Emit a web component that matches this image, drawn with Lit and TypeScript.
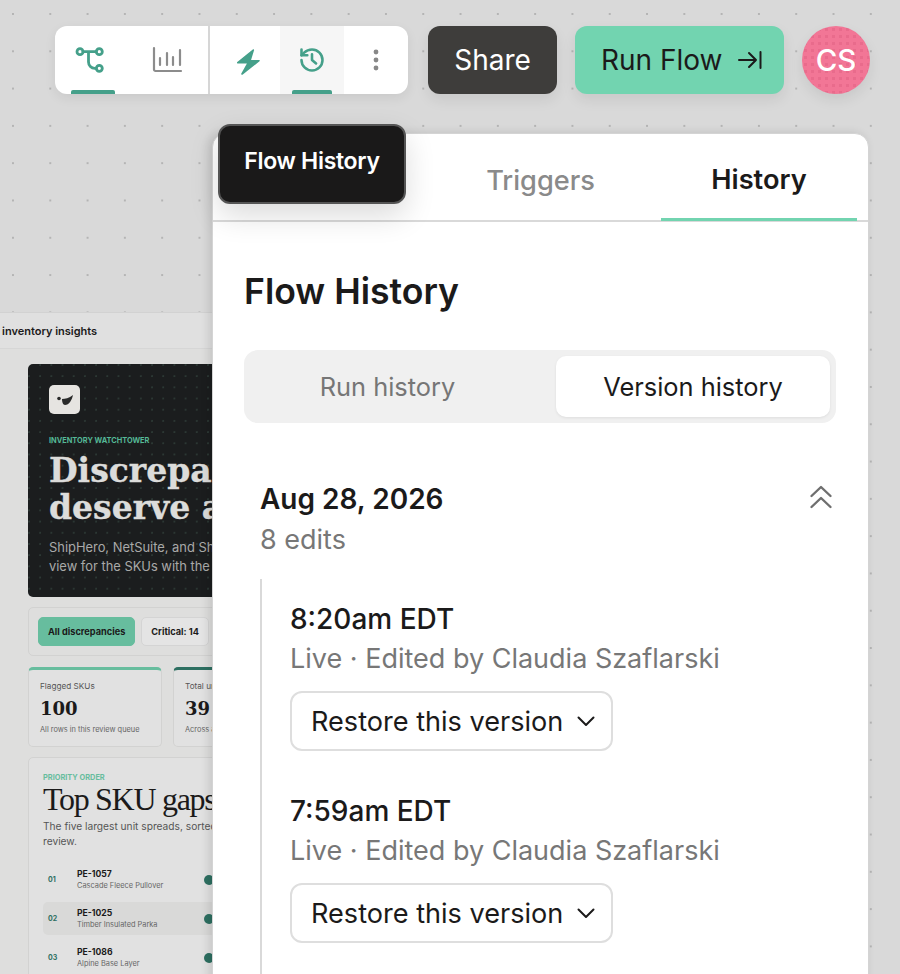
import { LitElement, html, css } from "lit";
import { customElement } from "lit/decorators.js";

@customElement("app-root")
export class AppRoot extends LitElement {
  static styles = css`
    :host {
      display: block;
      position: relative;
      width: 900px;
      height: 974px;
      overflow: hidden;
      font-family: Inter, "Liberation Sans", sans-serif;
      color: #1b1a1a;
      background-color: #d9d9d9;
      background-image: radial-gradient(circle at 1px 1px, #b4b4b4 1px, transparent 1.3px);
      background-size: 37.3px 37.3px;
      background-position: 12px 13px;
    }
    svg { display: block; }
    .topbar {
      display: flex;
      justify-content: flex-end;
      align-items: stretch;
      gap: 18px;
      padding: 26px 30px 0 0;
      height: 68px;
    }
    .tools {
      display: flex;
      margin-right: 2px;
      background: #fff;
      border-radius: 12px;
      overflow: hidden;
      box-shadow: 0 4px 12px rgba(0,0,0,.07);
    }
    .group { display: flex; }
    .g1 { gap: 11px; padding: 0 8px 0 6px; border-right: 2px solid #d6d6d6; }
    .g2 { padding-left: 6px; }
    .tool {
      position: relative;
      width: 64px;
      display: flex;
      align-items: center;
      justify-content: center;
    }
    .tool.hover { background: #f6f6f6; }
    .tool.on::after {
      content: "";
      position: absolute;
      bottom: 0;
      left: 10px;
      right: 10px;
      height: 4px;
      background: #45a08a;
      border-radius: 2px 2px 0 0;
    }
    .tool.hover.on::after { left: 12px; right: 12px; }
    .btn {
      display: flex;
      align-items: center;
      border-radius: 12px;
      font-size: 28px;
      font-weight: 400;
      box-shadow: 0 6px 14px rgba(0,0,0,.08);
    }
    .share { width: 129px; justify-content: center; background: #3e3d3b; color: #fff; }
    .run { width: 209px; padding-left: 26px; gap: 15px; box-sizing: border-box; background: #72d4b0; }
    .avatar {
      width: 68px;
      height: 68px;
      border-radius: 50%;
      display: flex;
      align-items: center;
      justify-content: center;
      color: #fff;
      font-size: 29.5px;
      font-weight: 500;
      background-color: #f27696;
      background-image: radial-gradient(circle, #e96b8c 1.6px, transparent 2px);
      background-size: 7px 7px;
      box-shadow: 0 6px 14px rgba(0,0,0,.08);
    }

    /* preview artboard on the canvas */
    .preview {
      position: absolute;
      left: 0;
      top: 312px;
      width: 212px;
      bottom: 0;
      overflow: hidden;
      background: #dededd;
    }
    .pv-head {
      height: 35px;
      display: flex;
      align-items: center;
      padding-left: 2px;
      background: #e0e0e0;
      border-top: 1px solid #d2d2d2;
      border-bottom: 1px solid #d6d6d6;
      font-size: 11px;
      font-weight: 600;
      white-space: nowrap;
    }
    .pv-body {
      width: 600px;
      padding: 15px 0 0 28px;
      display: flex;
      flex-direction: column;
      gap: 10px;
    }
    .hero {
      height: 233px;
      box-sizing: border-box;
      padding: 21px 0 0 21px;
      border-radius: 5px;
      background-color: #1b1d1e;
      background-image: radial-gradient(circle at 1px 1px, #2c3834 0.7px, transparent 1px);
      background-size: 11.2px 11.2px;
      color: #dcdcda;
    }
    .logo {
      width: 31px;
      height: 29px;
      border-radius: 5px;
      background: #e6e4e1;
      display: flex;
      align-items: center;
      justify-content: center;
    }
    .eyebrow {
      margin-top: 22px;
      font-size: 7.4px;
      font-weight: 700;
      color: #55b997;
      line-height: 10px;
      text-transform: uppercase;
    }
    .hero h1 {
      margin: 6px 0 0;
      font-family: "DejaVu Serif", serif;
      font-size: 33px;
      font-weight: 700;
      line-height: 37px;
      -webkit-text-stroke: 0.4px #dcdcda;
      white-space: nowrap;
    }
    .hero p {
      margin: 12px 0 0;
      font-size: 12.9px;
      line-height: 19px;
      color: #a9a9a8;
      white-space: nowrap;
    }
    .filters {
      height: 49px;
      box-sizing: border-box;
      border: 1px solid #d2d2d1;
      border-radius: 5px;
      display: flex;
      align-items: center;
      gap: 6px;
      padding-left: 9px;
      font-size: 9.2px;
      font-weight: 700;
    }
    .chip {
      height: 29px;
      display: flex;
      align-items: center;
      box-sizing: border-box;
      padding: 0 9px;
      border-radius: 5px;
      border: 1px solid #d4d4d4;
      background: #e4e4e4;
    }
    .chip.on { background: #67bd9e; border-color: #67bd9e; }
    .stats { display: flex; gap: 11px; margin-top: 1px; }
    .stat {
      width: 134px;
      height: 80px;
      box-sizing: border-box;
      padding: 11px 0 0 11px;
      border: 1px solid #d2d2d1;
      border-top: 3px solid #67bd9e;
      border-radius: 5px;
      background: #e1e1e1;
      white-space: nowrap;
    }
    .stat.dark { border-top-color: #2d6f61; }
    .stat .k { font-size: 8.2px; line-height: 11px; color: #555; }
    .stat .v {
      font-family: "DejaVu Serif", serif;
      font-weight: 700;
      font-size: 18px;
      line-height: 22px;
      margin-top: 6px;
    }
    .stat .s { font-size: 7.4px; line-height: 10px; color: #666; margin-top: 5px; }
    .prio {
      border: 1px solid #d2d2d1;
      border-radius: 5px;
      background: #e1e1e1;
      padding: 14px 0 0 14px;
      white-space: nowrap;
    }
    .prio .eb { font-size: 7.4px; font-weight: 700; line-height: 11px; color: #67bd9e; }
    .prio h2 {
      margin: 0;
      font-family: "Liberation Serif", serif;
      font-weight: 400;
      font-size: 32px;
      line-height: 32px;
      letter-spacing: -1.3px;
    }
    .prio p { margin: 4px 0 0; font-size: 10.2px; line-height: 15px; color: #555; }
    .rows { margin-top: 14px; }
    .row {
      display: flex;
      align-items: center;
      height: 33px;
      margin-bottom: 6px;
      border-radius: 5px;
    }
    .row.alt { background: #d9d9d8; }
    .row .n { width: 34px; padding-left: 5px; box-sizing: border-box; font-size: 7px; font-weight: 700; color: #2d6f61; }
    .row .name { width: 127px; }
    .row .a { font-size: 8.6px; font-weight: 700; line-height: 12px; }
    .row .b { font-size: 7.4px; line-height: 11px; color: #666; }
    .row .dot { width: 10px; height: 10px; border-radius: 50%; background: #2d6f61; }

    /* floating panel */
    .panel {
      position: absolute;
      left: 212px;
      top: 133px;
      width: 657px;
      height: 900px;
      box-sizing: border-box;
      background: #fff;
      border: 1px solid #d4d4d4;
      border-radius: 14px 14px 0 0;
      box-shadow: -3px 0 10px rgba(0,0,0,.12);
    }
    .tabs {
      display: flex;
      height: 86px;
      padding-right: 11px;
      border-bottom: 2px solid #d9d9d9;
      font-size: 27.2px;
    }
    .tab {
      display: flex;
      align-items: center;
      justify-content: center;
      color: #8a8a8a;
      font-weight: 500;
      padding-top: 7px;
      box-sizing: border-box;
    }
    .tab.t1 { width: 207px; }
    .tab.t2 { width: 241px; }
    .tab.t3 {
      width: 196px;
      color: #1b1a1a;
      font-weight: 600;
      border-bottom: 3px solid #72d4b0;
      margin-bottom: -1px;
    }
    .content { padding: 0 32px 0 31px; }
    .content h2 {
      margin: 48px 0 0;
      font-size: 35.6px;
      line-height: 44px;
      font-weight: 600;
    }
    .seg {
      margin-top: 36px;
      height: 73px;
      box-sizing: border-box;
      padding: 6px;
      border-radius: 14px;
      background: #f0f0f0;
      display: grid;
      grid-template-columns: 1fr 274px;
      font-size: 25.4px;
    }
    .seg div { display: flex; align-items: center; justify-content: center; color: #767676; }
    .seg .first { padding-right: 31px; }
    .seg .sel {
      color: #1b1a1a;
      background: #fff;
      border-radius: 10px;
      box-shadow: 0 1px 3px rgba(0,0,0,.08);
    }
    .day {
      margin-top: 57px;
      padding-left: 16px;
      display: flex;
      justify-content: space-between;
      align-items: flex-start;
    }
    .day .date { font-size: 28px; font-weight: 600; line-height: 38px; }
    .day .cnt { font-size: 27px; line-height: 44px; color: #777; }
    .day svg { margin: 4px 3px 0 0; }
    .timeline {
      margin: 17px 0 0 16px;
      padding: 20px 0 60px 28px;
      border-left: 2px solid #d9d9d9;
      display: flex;
      flex-direction: column;
      gap: 40px;
    }
    .t { font-size: 28px; line-height: 40px; font-weight: 500; }
    .m { font-size: 27px; line-height: 40px; color: #777; white-space: nowrap; }
    .restore {
      margin-top: 12px;
      width: 323px;
      height: 60px;
      box-sizing: border-box;
      padding-left: 19px;
      gap: 12px;
      display: flex;
      align-items: center;
      border: 2px solid #dedede;
      border-radius: 12px;
      font-size: 27.1px;
      white-space: nowrap;
    }
    .tip {
      position: absolute;
      left: 218px;
      top: 124px;
      width: 188px;
      height: 80px;
      box-sizing: border-box;
      display: flex;
      align-items: center;
      justify-content: center;
      padding-bottom: 7px;
      border: 2px solid #555;
      border-radius: 12px;
      background: #1a1919;
      color: #fff;
      font-size: 23px;
      font-weight: 600;
      letter-spacing: -0.3px;
      box-shadow: 0 12px 30px rgba(0,0,0,.14);
    }
  `;

  private entry(time: string) {
    return html`<div>
      <div class="t">${time}</div>
      <div class="m">Live · Edited by Claudia Szaflarski</div>
      <div class="restore">
        Restore this version
        <svg width="22" height="22" viewBox="0 0 22 22" fill="none" stroke="#1b1a1a" stroke-width="2" stroke-linecap="round" stroke-linejoin="round"><path d="M3.5 7.5 11 15l7.5-7.5"/></svg>
      </div>
    </div>`;
  }

  private row(n: string, a: string, b: string, alt = false) {
    return html`<div class="row ${alt ? "alt" : ""}">
      <div class="n">${n}</div>
      <div class="name"><div class="a">${a}</div><div class="b">${b}</div></div>
      <div class="dot"></div>
    </div>`;
  }

  render() {
    return html`
      <div class="topbar">
        <div class="tools">
          <div class="group g1">
            <div class="tool on">
              <svg width="40" height="40" viewBox="0 0 40 40" fill="none" stroke="#45a08a" stroke-width="2.8" stroke-linecap="round"><circle cx="7" cy="11.7" r="3"/><circle cx="26.3" cy="11.7" r="3"/><circle cx="26.3" cy="28.3" r="3"/><path d="M10 11.7h13.3M15.5 11.7V22a6.3 6.3 0 0 0 6.3 6.3h1.500"/></svg>
            </div>
            <div class="tool">
              <svg width="40" height="40" viewBox="0 0 40 40" fill="none" stroke="#8c8c8c" stroke-width="2.2" stroke-linecap="round"><path d="M6 8v21.5A1.5 1.5 0 0 0 7.500 31H33M12 25v-7M19 25V13M25 25v-8M32 25V10"/></svg>
            </div>
          </div>
          <div class="group g2">
            <div class="tool">
              <svg width="40" height="40" viewBox="0 0 40 40" fill="#45a08a" stroke="#45a08a" stroke-width="1.6" stroke-linejoin="round"><path d="M25.300 10 9.800 22.700h10.500L14 34l17-13.300h-9z"/></svg>
            </div>
            <div class="tool hover on">
              <svg width="28" height="28" viewBox="0 0 24 24" fill="none" stroke="#45a08a" stroke-width="2.200" stroke-linecap="round" stroke-linejoin="round"><path d="M3 12a9 9 0 1 0 9-9 9.750 9.750 0 0 0-6.740 2.740L3 8"/><path d="M3 3v5h5"/><path d="M12 7v5l3.500 3"/></svg>
            </div>
            <div class="tool">
              <svg width="10" height="28" viewBox="0 0 10 28" fill="#888"><circle cx="5" cy="6" r="2.400"/><circle cx="5" cy="14" r="2.400"/><circle cx="5" cy="22" r="2.400"/></svg>
            </div>
          </div>
        </div>
        <div class="btn share">Share</div>
        <div class="btn run">
          Run Flow
          <svg width="26" height="22" viewBox="0 0 26 22" fill="none" stroke="#1b1a1a" stroke-width="2" stroke-linecap="round" stroke-linejoin="round"><path d="M1 11h17M11 4l7 7-7 7M22.500 3v16"/></svg>
        </div>
        <div class="avatar">CS</div>
      </div>

      <div class="preview">
        <div class="pv-head">inventory insights</div>
        <div class="pv-body">
          <div class="hero">
            <div class="logo">
              <svg width="18" height="12" viewBox="0 0 18 12" fill="#2a2a2a"><path d="M6 5c3 0 7-1 11-4-1 5-4 10-8 10C7 11 6 8 6 5z"/><circle cx="3" cy="4.500" r="1.800"/></svg>
            </div>
            <div class="eyebrow">Inventory Watchtower</div>
            <h1>Discrepancies<br />deserve a closer look</h1>
            <p>ShipHero, NetSuite, and Shopify in a single review<br />view for the SKUs with the widest unit spread.</p>
          </div>
          <div class="filters">
            <div class="chip on">All discrepancies</div>
            <div class="chip">Critical: 14</div>
          </div>
          <div class="stats">
            <div class="stat"><div class="k">Flagged SKUs</div><div class="v">100</div><div class="s">All rows in this review queue</div></div>
            <div class="stat dark"><div class="k">Total units</div><div class="v">39</div><div class="s">Across all systems</div></div>
          </div>
          <div class="prio">
            <div class="eb">PRIORITY ORDER</div>
            <h2>Top SKU gaps</h2>
            <p>The five largest unit spreads, sorted by severity for<br />review.</p>
            <div class="rows">
              ${this.row("01", "PE-1057", "Cascade Fleece Pullover")}
              ${this.row("02", "PE-1025", "Timber Insulated Parka", true)}
              ${this.row("03", "PE-1086", "Alpine Base Layer")}
            </div>
          </div>
        </div>
      </div>

      <div class="panel">
        <div class="tabs">
          <div class="tab t1"></div>
          <div class="tab t2">Triggers</div>
          <div class="tab t3">History</div>
        </div>
        <div class="content">
          <h2>Flow History</h2>
          <div class="seg"><div class="first">Run history</div><div class="sel">Version history</div></div>
          <div class="day">
            <div>
              <div class="date">Aug 28, 2026</div>
              <div class="cnt">8 edits</div>
            </div>
            <svg width="24" height="26" viewBox="0 0 24 26" fill="none" stroke="#6f6f6f" stroke-width="2.400" stroke-linecap="round" stroke-linejoin="round"><path d="M2.500 12 12 3l9.500 9M2.500 23 12 14l9.500 9"/></svg>
          </div>
          <div class="timeline">
            ${this.entry("8:20am EDT")}
            ${this.entry("7:59am EDT")}
          </div>
        </div>
      </div>

      <div class="tip">Flow History</div>
    `;
  }
}
